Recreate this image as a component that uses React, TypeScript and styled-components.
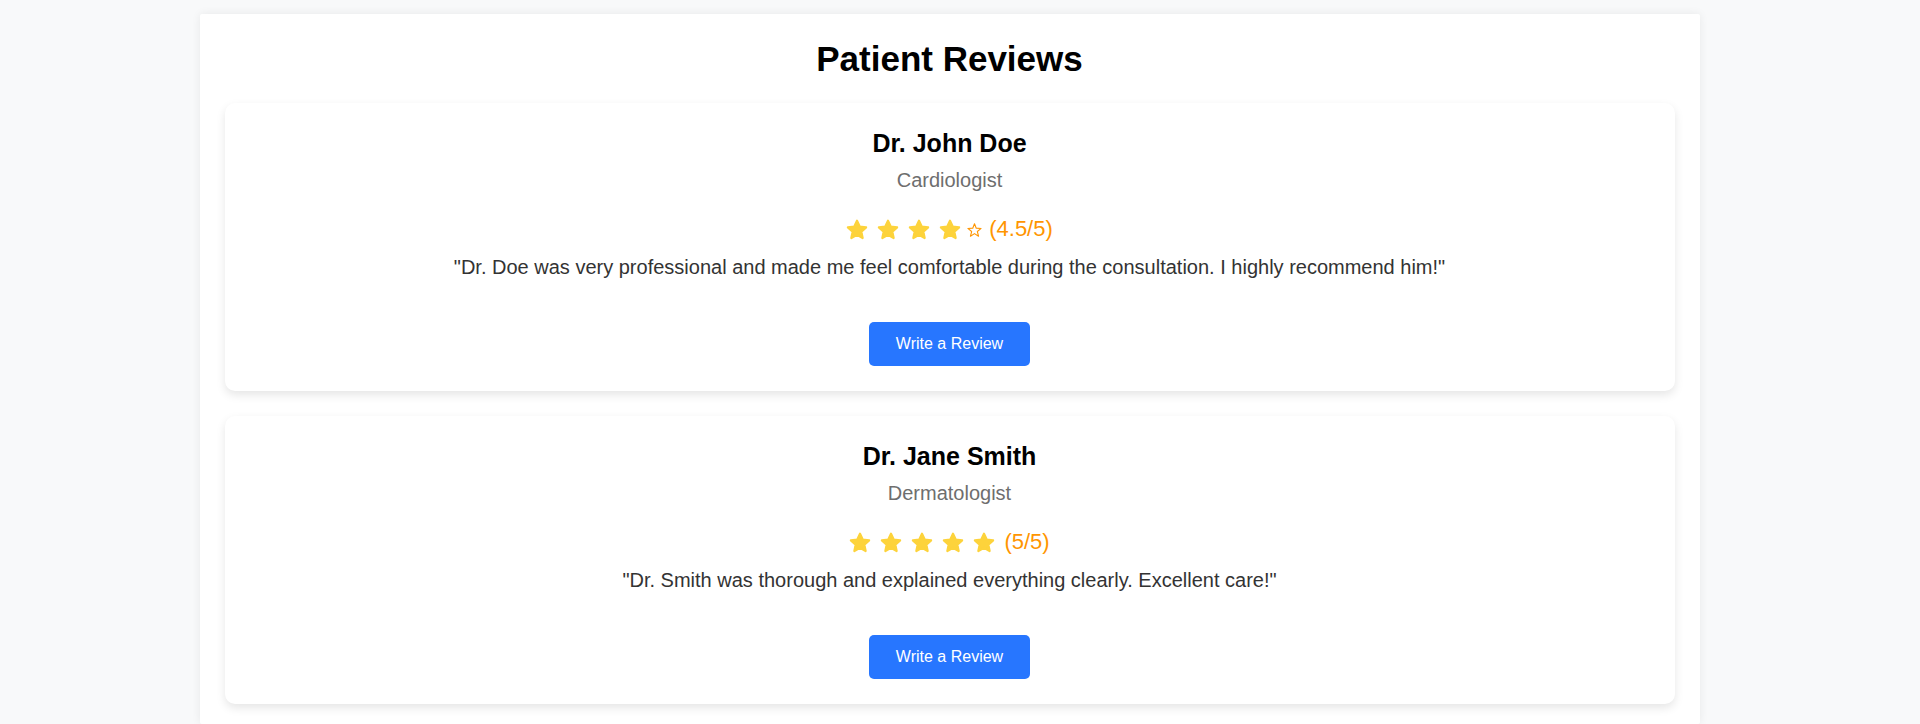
import React, { useLayoutEffect, useRef } from "react";
import styled, { createGlobalStyle } from "styled-components";

const GlobalStyle = createGlobalStyle`
  html, body {
    margin: 0;
    height: 100%;
    overflow: hidden;
  }
  body {
    background: #f8f9fa;
    font-family: "Liberation Sans", Arial, sans-serif;
  }
`;

const Viewport = styled.div`
  box-sizing: border-box;
  height: 100vh;
  overflow-y: scroll;
  background: #f8f9fa;
  padding-right: 21px;

  &::-webkit-scrollbar {
    width: 21px;
  }
  &::-webkit-scrollbar-track {
    background: #f1f1f1;
  }
  &::-webkit-scrollbar-thumb {
    background: #a8a8a8;
    border-style: solid;
    border-color: #f1f1f1;
    border-width: 0 2px;
  }
`;

const Page = styled.div`
  display: flex;
  flex-direction: column;
  align-items: center;
`;

const AboveFold = styled.div`
  height: 1354px;
  width: 100%;
`;

const Section = styled.section`
  box-sizing: border-box;
  width: 1500px;
  background: #ffffff;
  padding: 25px 25px 20px;
  box-shadow: 0 0 10px rgba(0, 0, 0, 0.07);
  border-radius: 2px;
`;

const Title = styled.h2`
  margin: 0 0 24px;
  text-align: center;
  font-size: 35px;
  font-weight: 700;
  color: #000;
`;

const CardList = styled.div`
  display: flex;
  flex-direction: column;
  gap: 25px;
`;

const Card = styled.article`
  display: flex;
  flex-direction: column;
  align-items: center;
  text-align: center;
  background: #fff;
  border-radius: 10px;
  padding: 26px 20px 25px;
  box-shadow: 0 4px 10px rgba(0, 0, 0, 0.1);
`;

const DoctorName = styled.h3`
  margin: 0;
  font-size: 25px;
  font-weight: 700;
  color: #000;
`;

const Specialty = styled.p`
  margin: 11px 0 0;
  font-size: 20px;
  color: #6e6e6e;
`;

const RatingRow = styled.div`
  margin-top: 24px;
  display: flex;
  align-items: center;
  justify-content: center;
  font-size: 22px;
  color: #ff9500;
`;

const FullStarIcon = styled.svg`
  width: 22px;
  height: 21px;
  margin-right: 9px;
  flex: none;
`;

const EmptyStarIcon = styled.svg`
  width: 15px;
  height: 14px;
  margin: 2px 7px 0 -3px;
  flex: none;
`;

const Review = styled.p`
  margin: 14px 0 0;
  font-size: 20px;
  color: #333;
`;

const ReviewButton = styled.button`
  margin-top: 43px;
  border: none;
  border-radius: 5px;
  background: #2776ff;
  color: #fff;
  font-family: "Liberation Sans", Arial, sans-serif;
  font-size: 16px;
  padding: 13px 27px;
  cursor: pointer;
`;

const FullStar = () => (
  <FullStarIcon viewBox="0 0 22 21" aria-hidden="true">
    <polygon
      points="11,1.7 13.7,7.58 20.13,8.33 15.37,12.72 16.64,19.07 11,15.9 5.36,19.07 6.63,12.72 1.87,8.33 8.3,7.58"
      fill="#fdd33b"
      stroke="#fdd33b"
      strokeWidth="2.2"
      strokeLinejoin="round"
    />
  </FullStarIcon>
);

const EmptyStar = () => (
  <EmptyStarIcon viewBox="0 0 15 14" aria-hidden="true">
    <polygon
      points="7.5,0.8 9.26,5.17 14.1,5.44 10.35,8.53 11.55,13.2 7.5,10.6 3.45,13.2 4.65,8.53 0.9,5.44 5.74,5.17"
      fill="none"
      stroke="#ff9500"
      strokeWidth="1.1"
      strokeLinejoin="round"
    />
  </EmptyStarIcon>
);

type ReviewData = {
  name: string;
  specialty: string;
  full: number;
  half: boolean;
  score: string;
  text: string;
};

const reviews: ReviewData[] = [
  {
    name: "Dr. John Doe",
    specialty: "Cardiologist",
    full: 4,
    half: true,
    score: "(4.5/5)",
    text: "\"Dr. Doe was very professional and made me feel comfortable during the consultation. I highly recommend him!\"",
  },
  {
    name: "Dr. Jane Smith",
    specialty: "Dermatologist",
    full: 5,
    half: false,
    score: "(5/5)",
    text: "\"Dr. Smith was thorough and explained everything clearly. Excellent care!\"",
  },
];

export default function App() {
  const viewportRef = useRef<HTMLDivElement>(null);

  useLayoutEffect(() => {
    const el = viewportRef.current;
    if (el) el.scrollTop = el.scrollHeight;
  }, []);

  return (
    <>
      <GlobalStyle />
      <Viewport ref={viewportRef}>
        <Page>
          <AboveFold />
          <Section>
            <Title>Patient Reviews</Title>
            <CardList>
              {reviews.map((r) => (
                <Card key={r.name}>
                  <DoctorName>{r.name}</DoctorName>
                  <Specialty>{r.specialty}</Specialty>
                  <RatingRow>
                    {Array.from({ length: r.full }).map((_, i) => (
                      <FullStar key={i} />
                    ))}
                    {r.half && <EmptyStar />}
                    <span>{r.score}</span>
                  </RatingRow>
                  <Review>{r.text}</Review>
                  <ReviewButton>Write a Review</ReviewButton>
                </Card>
              ))}
            </CardList>
          </Section>
        </Page>
      </Viewport>
    </>
  );
}
